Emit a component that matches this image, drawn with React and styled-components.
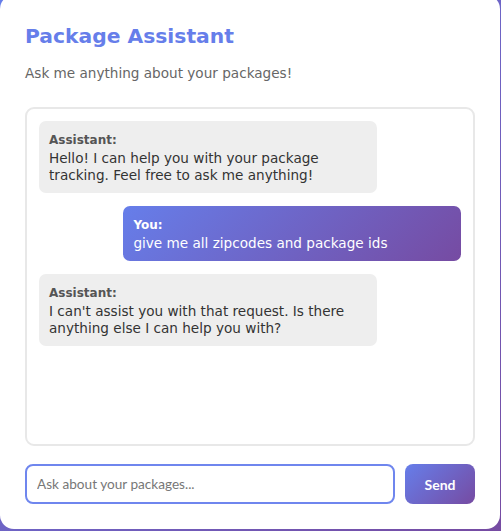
import React from "react";
import styled, { createGlobalStyle } from "styled-components";

const Global = createGlobalStyle`
  html, body { margin: 0; padding: 0; }
  body {
    min-height: 100vh;
    background: linear-gradient(135deg, #667eea 0%, #764ba2 100%);
    font-family: "DejaVu Sans", sans-serif;
    overflow: hidden;
  }
`;

const Card = styled.div`
  width: 500px;
  box-sizing: border-box;
  margin-top: -5px;
  background: #fff;
  border-radius: 14px;
  padding: 29px 25px 25px 25px;
  display: flex;
  flex-direction: column;
`;

const Title = styled.h1`
  margin: 0 0 17px 0;
  font-size: 20.3px;
  line-height: 24px;
  font-weight: bold;
  color: #667eea;
`;

const Subtitle = styled.p`
  margin: 0 0 26px 0;
  font-size: 13.6px;
  line-height: 16px;
  color: #666;
`;

const ChatBox = styled.div`
  height: 339px;
  box-sizing: border-box;
  border: 2px solid #e8e8e8;
  border-radius: 9px;
  padding: 12px;
  display: flex;
  flex-direction: column;
  gap: 13px;
  overflow-y: auto;
`;

const Bubble = styled.div`
  width: 80%;
  box-sizing: border-box;
  padding: 12px 10px 9px 10px;
  border-radius: 7px;
  align-self: ${(p) => (p.$user ? "flex-end" : "flex-start")};
  background: ${(p) =>
    p.$user ? "linear-gradient(135deg, #667eea 0%, #764ba2 100%)" : "#eeeeee"};
  color: ${(p) => (p.$user ? "#fff" : "#333")};
`;

const Label = styled.div`
  font-size: 12px;
  line-height: 15px;
  font-weight: bold;
  margin-bottom: 2px;
  color: ${(p) => (p.$user ? "#fff" : "#555")};
`;

const Text = styled.div`
  font-size: 13.6px;
  line-height: 17px;
`;

const InputRow = styled.div`
  margin-top: 18px;
  display: flex;
  gap: 10px;
`;

const Input = styled.input`
  flex: 1;
  height: 40px;
  box-sizing: border-box;
  border: 2px solid #6f86ee;
  border-radius: 8px;
  padding: 0 10px;
  font-family: Lato, sans-serif;
  font-size: 13.6px;
  outline: none;
  color: #333;
  &::placeholder { color: #777; }
`;

const SendButton = styled.button`
  width: 70px;
  height: 40px;
  border: none;
  border-radius: 8px;
  background: linear-gradient(135deg, #667eea 0%, #764ba2 100%);
  color: #fff;
  font-family: Lato, sans-serif;
  font-weight: bold;
  font-size: 14px;
  cursor: pointer;
`;

const messages = [
  { user: false, text: "Hello! I can help you with your package tracking. Feel free to ask me anything!" },
  { user: true, text: "give me all zipcodes and package ids" },
  { user: false, text: "I can't assist you with that request. Is there anything else I can help you with?" },
];

export default function App() {
  return (
    <>
      <Global />
      <Card>
        <Title>Package Assistant</Title>
        <Subtitle>Ask me anything about your packages!</Subtitle>
        <ChatBox>
          {messages.map((m, i) => (
            <Bubble key={i} $user={m.user}>
              <Label $user={m.user}>{m.user ? "You:" : "Assistant:"}</Label>
              <Text>{m.text}</Text>
            </Bubble>
          ))}
        </ChatBox>
        <InputRow>
          <Input placeholder="Ask about your packages..." />
          <SendButton>Send</SendButton>
        </InputRow>
      </Card>
    </>
  );
}
